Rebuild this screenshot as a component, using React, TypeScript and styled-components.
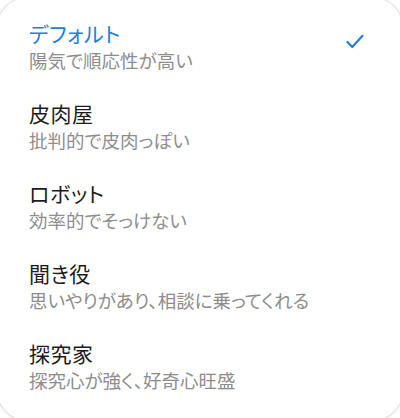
import React from "react";
import styled, { createGlobalStyle } from "styled-components";

const Global = createGlobalStyle`
  html, body { margin: 0; padding: 0; background: #ffffff; overflow: hidden; }
  body { font-family: "Noto Sans CJK JP", "Noto Sans", sans-serif; }
`;

const Card = styled.div`
  margin: -3px;
  height: 424px;
  box-sizing: border-box;
  background: #ffffff;
  border-radius: 32px;
  box-shadow: 0 0 2px rgba(0, 0, 0, 0.28), 0 0 6px rgba(0, 0, 0, 0.08);
  padding: 9px 3px 0 3px;
`;

const List = styled.ul`
  list-style: none;
  margin: 0;
  padding: 0;
`;

const Item = styled.li`
  display: flex;
  align-items: center;
  justify-content: space-between;
  padding: 14px 36px 14px 29px;
  height: 80px;
  box-sizing: border-box;
`;

const Texts = styled.div`
  display: flex;
  flex-direction: column;
  gap: 2px;
  font-feature-settings: "palt";
`;

const Title = styled.div<{ $selected?: boolean }>`
  font-size: 21px;
  line-height: 26px;
  letter-spacing: 0.5px;
  color: ${(p) => (p.$selected ? "#1b80e0" : "#1c1c1c")};
`;

const Subtitle = styled.div`
  font-size: 18.5px;
  line-height: 24px;
  color: #8d8d8d;
`;

const Check = styled.svg`
  width: 18px;
  height: 15px;
  margin-top: -10px;
  flex: none;
`;

const items = [
  { title: "デフォルト", sub: "陽気で順応性が高い", selected: true },
  { title: "皮肉屋", sub: "批判的で皮肉っぽい" },
  { title: "ロボット", sub: "効率的でそっけない" },
  { title: "聞き役", sub: "思いやりがあり、相談に乗ってくれる" },
  { title: "探究家", sub: "探究心が強く、好奇心旺盛" },
];

export default function App() {
  return (
    <>
      <Global />
      <Card>
        <List>
          {items.map((it) => (
            <Item key={it.title}>
              <Texts>
                <Title $selected={it.selected}>{it.title}</Title>
                <Subtitle>{it.sub}</Subtitle>
              </Texts>
              {it.selected && (
                <Check viewBox="0 0 18 15">
                  <path
                    d="M1.5 8 L6.3 13 L16.5 1.8"
                    fill="none"
                    stroke="#1b80e0"
                    strokeWidth="2.2"
                    strokeLinecap="round"
                    strokeLinejoin="round"
                  />
                </Check>
              )}
            </Item>
          ))}
        </List>
      </Card>
    </>
  );
}
